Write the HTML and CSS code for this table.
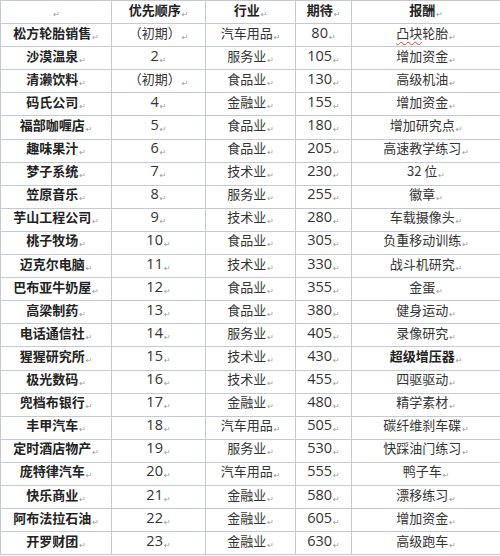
FILE: index.html
```html
<!DOCTYPE html>
<html lang="zh">
<head>
<meta charset="utf-8">
<link rel="stylesheet" href="styles.css">
</head>
<body>
<table class="grid">
  <colgroup>
    <col class="c1"><col class="c2"><col class="c3"><col class="c4"><col class="c5">
  </colgroup>
  <thead>
    <tr><th><span class="pm">↵</span></th><th>优先顺序<span class="pm">↵</span></th><th>行业<span class="pm">↵</span></th><th>期待<span class="pm">↵</span></th><th>报酬<span class="pm">↵</span></th></tr>
  </thead>
  <tbody>
    <tr><td class="name">松方轮胎销售<span class="pm">↵</span></td><td class="early">（初期）<span class="pm">↵</span></td><td>汽车用品<span class="pm">↵</span></td><td>80<span class="pm">↵</span></td><td><span class="spell">凸块</span>轮胎<span class="pm">↵</span></td></tr>
    <tr><td class="name">沙漠温泉<span class="pm">↵</span></td><td>2<span class="pm">↵</span></td><td>服务业<span class="pm">↵</span></td><td>105<span class="pm">↵</span></td><td>增加资金<span class="pm">↵</span></td></tr>
    <tr><td class="name">清濑饮料<span class="pm">↵</span></td><td class="early">（初期）<span class="pm">↵</span></td><td>食品业<span class="pm">↵</span></td><td>130<span class="pm">↵</span></td><td>高级机油<span class="pm">↵</span></td></tr>
    <tr><td class="name">码氏公司<span class="pm">↵</span></td><td>4<span class="pm">↵</span></td><td>金融业<span class="pm">↵</span></td><td>155<span class="pm">↵</span></td><td>增加资金<span class="pm">↵</span></td></tr>
    <tr><td class="name">福部咖喱店<span class="pm">↵</span></td><td>5<span class="pm">↵</span></td><td>食品业<span class="pm">↵</span></td><td>180<span class="pm">↵</span></td><td>增加研究点<span class="pm">↵</span></td></tr>
    <tr><td class="name">趣味果汁<span class="pm">↵</span></td><td>6<span class="pm">↵</span></td><td>食品业<span class="pm">↵</span></td><td>205<span class="pm">↵</span></td><td>高速教学练习<span class="pm">↵</span></td></tr>
    <tr><td class="name">梦子系统<span class="pm">↵</span></td><td>7<span class="pm">↵</span></td><td>技术业<span class="pm">↵</span></td><td>230<span class="pm">↵</span></td><td>32 位<span class="pm">↵</span></td></tr>
    <tr><td class="name">笠原音乐<span class="pm">↵</span></td><td>8<span class="pm">↵</span></td><td>服务业<span class="pm">↵</span></td><td>255<span class="pm">↵</span></td><td>徽章<span class="pm">↵</span></td></tr>
    <tr><td class="name">芋山工程公司<span class="pm">↵</span></td><td>9<span class="pm">↵</span></td><td>技术业<span class="pm">↵</span></td><td>280<span class="pm">↵</span></td><td>车载摄像头<span class="pm">↵</span></td></tr>
    <tr><td class="name">桃子牧场<span class="pm">↵</span></td><td>10<span class="pm">↵</span></td><td>食品业<span class="pm">↵</span></td><td>305<span class="pm">↵</span></td><td>负重移动训练<span class="pm">↵</span></td></tr>
    <tr><td class="name">迈克尔电脑<span class="pm">↵</span></td><td>11<span class="pm">↵</span></td><td>技术业<span class="pm">↵</span></td><td>330<span class="pm">↵</span></td><td>战斗机研究<span class="pm">↵</span></td></tr>
    <tr><td class="name">巴布亚牛奶屋<span class="pm">↵</span></td><td>12<span class="pm">↵</span></td><td>食品业<span class="pm">↵</span></td><td>355<span class="pm">↵</span></td><td>金蛋<span class="pm">↵</span></td></tr>
    <tr><td class="name">高梁制药<span class="pm">↵</span></td><td>13<span class="pm">↵</span></td><td>食品业<span class="pm">↵</span></td><td>380<span class="pm">↵</span></td><td>健身运动<span class="pm">↵</span></td></tr>
    <tr><td class="name">电话通信社<span class="pm">↵</span></td><td>14<span class="pm">↵</span></td><td>服务业<span class="pm">↵</span></td><td>405<span class="pm">↵</span></td><td>录像研究<span class="pm">↵</span></td></tr>
    <tr><td class="name">猩猩研究所<span class="pm">↵</span></td><td>15<span class="pm">↵</span></td><td>技术业<span class="pm">↵</span></td><td>430<span class="pm">↵</span></td><td class="strong">超级增压器<span class="pm">↵</span></td></tr>
    <tr><td class="name">极光数码<span class="pm">↵</span></td><td>16<span class="pm">↵</span></td><td>技术业<span class="pm">↵</span></td><td>455<span class="pm">↵</span></td><td>四驱驱动<span class="pm">↵</span></td></tr>
    <tr><td class="name">兜档布银行<span class="pm">↵</span></td><td>17<span class="pm">↵</span></td><td>金融业<span class="pm">↵</span></td><td>480<span class="pm">↵</span></td><td>精学素材<span class="pm">↵</span></td></tr>
    <tr><td class="name">丰甲汽车<span class="pm">↵</span></td><td>18<span class="pm">↵</span></td><td>汽车用品<span class="pm">↵</span></td><td>505<span class="pm">↵</span></td><td>碳纤维刹车碟<span class="pm">↵</span></td></tr>
    <tr><td class="name">定时酒店物产<span class="pm">↵</span></td><td>19<span class="pm">↵</span></td><td>服务业<span class="pm">↵</span></td><td>530<span class="pm">↵</span></td><td>快踩油门练习<span class="pm">↵</span></td></tr>
    <tr><td class="name">庞特律汽车<span class="pm">↵</span></td><td>20<span class="pm">↵</span></td><td>汽车用品<span class="pm">↵</span></td><td>555<span class="pm">↵</span></td><td>鸭子车<span class="pm">↵</span></td></tr>
    <tr><td class="name">快乐商业<span class="pm">↵</span></td><td>21<span class="pm">↵</span></td><td>金融业<span class="pm">↵</span></td><td>580<span class="pm">↵</span></td><td>漂移练习<span class="pm">↵</span></td></tr>
    <tr><td class="name">阿布法拉石油<span class="pm">↵</span></td><td>22<span class="pm">↵</span></td><td>金融业<span class="pm">↵</span></td><td>605<span class="pm">↵</span></td><td>增加资金<span class="pm">↵</span></td></tr>
    <tr><td class="name">开罗财团<span class="pm">↵</span></td><td>23<span class="pm">↵</span></td><td>金融业<span class="pm">↵</span></td><td>630<span class="pm">↵</span></td><td>高级跑车<span class="pm">↵</span></td></tr>
  </tbody>
</table>
</body>
</html>
```

FILE: styles.css
```css
html, body {
  margin: 0;
  padding: 0;
  background: #ffffff;
}

body {
  font-family: "Noto Sans CJK SC", "Noto Sans", sans-serif;
  color: #333333;
  font-size: 13px;
}

.grid {
  border-collapse: collapse;
  table-layout: fixed;
  width: 500px;
}

.c1 { width: 111px; }
.c2 { width: 94px; }
.c3 { width: 90px; }
.c4 { width: 56px; }
.c5 { width: 149px; }

.grid th,
.grid td {
  border: 1px solid #c4c9d3;
  height: 22.1px;
  padding: 0;
  text-align: center;
  vertical-align: middle;
  white-space: nowrap;
  line-height: 16px;
  overflow: hidden;
}

.grid th {
  font-weight: 700;
  color: #222;
}

.grid td {
  font-weight: 400;
}

.grid td:nth-child(2),
.grid td:nth-child(4) {
  font-size: 14.5px;
  font-family: "Open Sans", "Noto Sans CJK SC", sans-serif;
}

.grid td.early {
  font-size: 13px;
  font-family: "Noto Sans CJK SC", sans-serif;
}

.grid td.name {
  font-weight: 700;
  color: #222;
}

.grid td.strong {
  font-weight: 700;
  color: #222;
}

.pm {
  display: inline-block;
  font-family: "DejaVu Sans", sans-serif;
  font-size: 8px;
  font-weight: 400;
  color: #9a9a9a;
  margin-left: 1px;
  vertical-align: -2px;
}

.spell {
  text-decoration: underline wavy #e0403a;
  text-decoration-thickness: 1px;
  text-underline-offset: 3px;
}
```
